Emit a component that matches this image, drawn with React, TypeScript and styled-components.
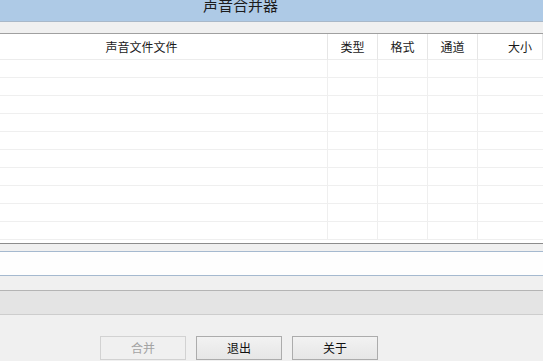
import React from 'react'
import styled, { createGlobalStyle } from 'styled-components'

const columns = [
  { key: 'file', title: '声音文件文件', align: 'center' as const },
  { key: 'type', title: '类型', align: 'center' as const },
  { key: 'format', title: '格式', align: 'center' as const },
  { key: 'channel', title: '通道', align: 'center' as const },
  { key: 'size', title: '大小', align: 'right' as const },
]

const rows = Array.from({ length: 10 }, (_, i) => i)

const App: React.FC = () => {
  return (
    <>
      <GlobalStyle />
      <Window>
        <TitleBar>
          <TitleText>声音合并器</TitleText>
        </TitleBar>
        <TopBand />
        <ListView>
          <Grid>
            {columns.map((c) => (
              <HeaderCell key={c.key} align={c.align}>
                {c.title}
              </HeaderCell>
            ))}
            {rows.map((r) =>
              columns.map((c, i) => (
                <Cell key={`${r}-${c.key}`} $last={i === columns.length - 1} />
              ))
            )}
          </Grid>
        </ListView>
        <Gap />
        <PathInput />
        <Gap $height={14} />
        <StatusBar />
        <ButtonRow>
          <Button disabled>合并</Button>
          <Button>退出</Button>
          <Button>关于</Button>
        </ButtonRow>
      </Window>
    </>
  )
}

export default App

const GlobalStyle = createGlobalStyle`
  html, body {
    margin: 0;
    padding: 0;
    background: #f0f0f0;
    overflow: hidden;
  }
  body {
    font-family: "Noto Sans CJK SC", "Noto Sans", sans-serif;
    font-size: 12px;
    color: #1a1a1a;
  }
`

const Window = styled.div`
  width: 543px;
  height: 361px;
  display: flex;
  flex-direction: column;
  background: #f0f0f0;
  overflow: hidden;
`

const TitleBar = styled.div`
  height: 21px;
  flex-shrink: 0;
  display: flex;
  justify-content: center;
  align-items: flex-start;
  padding-right: 62px;
  background: #aecae6;
  border-bottom: 1px solid #a9b8c8;
  overflow: hidden;
`

const TitleText = styled.span`
  font-size: 15px;
  line-height: 15px;
  margin-top: -3px;
  color: #1c1c1c;
`

const TopBand = styled.div`
  height: 11px;
  flex-shrink: 0;
  background: #f0f0f0;
  border-bottom: 1px solid #a0a0a0;
`

const ListView = styled.div`
  height: 209px;
  flex-shrink: 0;
  background: #ffffff;
  border-bottom: 1px solid #8c8c8c;
  overflow: hidden;
`

const Grid = styled.div`
  display: grid;
  grid-template-columns: 328px 50px 50px 50px 1fr;
  grid-template-rows: 26px repeat(10, 18px);
`

const HeaderCell = styled.div<{ align: 'center' | 'right' }>`
  display: flex;
  align-items: center;
  justify-content: ${(p) => (p.align === 'right' ? 'flex-end' : 'center')};
  padding-right: ${(p) => (p.align === 'right' ? '10px' : '0')};
  border-bottom: 1px solid #ececec;
  border-right: 1px solid #e6e6e6;
  font-size: 12px;
  color: #1a1a1a;
  &:first-child {
    padding-right: 44px;
  }
  &:last-child {
    border-right: none;
  }
`

const Cell = styled.div<{ $last?: boolean }>`
  border-bottom: 1px solid #efefef;
  border-right: ${(p) => (p.$last ? 'none' : '1px solid #efefef')};
`

const Gap = styled.div<{ $height?: number }>`
  height: ${(p) => p.$height ?? 7}px;
  flex-shrink: 0;
  background: #f0f0f0;
`

const PathInput = styled.div`
  height: 23px;
  flex-shrink: 0;
  background: #fefefe;
  border-top: 1px solid #a5b9cf;
  border-bottom: 1px solid #a5b9cf;
`

const StatusBar = styled.div`
  height: 23px;
  flex-shrink: 0;
  background: #e4e4e4;
  border-top: 1px solid #b4b4b4;
  border-bottom: 1px solid #cdcdcd;
`

const ButtonRow = styled.div`
  display: flex;
  gap: 10px;
  padding-left: 100px;
  padding-top: 21px;
`

const Button = styled.button`
  width: 86px;
  height: 24px;
  padding: 0;
  border: 1px solid ${(p) => (p.disabled ? '#d2d2d2' : '#acacac')};
  background: ${(p) =>
    p.disabled ? '#f0f0f0' : 'linear-gradient(#f2f2f2, #e6e6e6)'};
  color: ${(p) => (p.disabled ? '#a3a3a3' : '#111111')};
  font-family: "Noto Sans CJK SC", "Noto Sans", sans-serif;
  font-size: 12px;
  line-height: 20px;
`
